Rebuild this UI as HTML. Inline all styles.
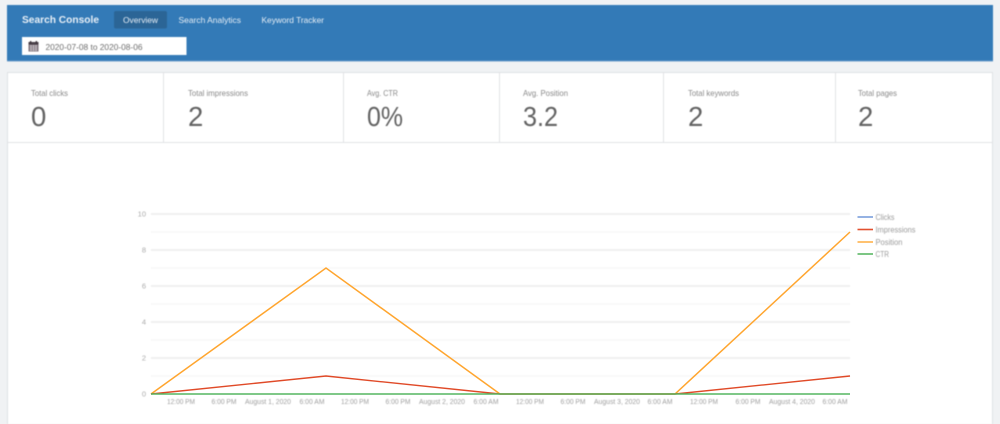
<!DOCTYPE html>
<html><head><meta charset="utf-8"><title>Search Console</title>
<style>
html,body{margin:0;padding:0;width:1000px;height:424px;overflow:hidden;background:#f0f2f4}
svg{display:block;position:absolute;left:0;top:0}
svg.base{filter:blur(.45px)}
svg.lines{filter:blur(.3px)}
text{font-family:"Liberation Sans",sans-serif}
.gl{font-size:7.5px;fill:#a0a0a0;text-anchor:middle}
.st{font-size:8.2px;fill:#8a8a8a}
.num{font-size:27.500px;fill:#636363}
.nav{font-size:8.5px;fill:#e6eef6}
.lg{font-size:8px;fill:#9c9c9c}
.ax{font-size:7.5px;fill:#aaaaaa;text-anchor:end}
</style></head><body>
<svg class="base" width="1000" height="424" viewBox="0 0 1000 424" xmlns="http://www.w3.org/2000/svg">
<rect width="1000" height="424" fill="#f0f2f4"/>
<!-- header -->
<rect x="7" y="5" width="986" height="56" fill="#337ab7"/>
<rect x="7" y="60.500" width="986" height="1" fill="#6a9bc9"/>
<text x="22" y="23" font-size="10.500" font-weight="bold" fill="#e9f0f7" textLength="77" lengthAdjust="spacingAndGlyphs">Search Console</text>
<rect x="114" y="11" width="53" height="17.500" rx="2" fill="#2b6596"/>
<text class="nav" x="123" y="23" textLength="35" lengthAdjust="spacingAndGlyphs">Overview</text>
<text class="nav" x="178.500" y="23" textLength="62.500" lengthAdjust="spacingAndGlyphs">Search Analytics</text>
<text class="nav" x="261.500" y="23" textLength="62.500" lengthAdjust="spacingAndGlyphs">Keyword Tracker</text>
<rect x="22" y="37" width="164.500" height="18" fill="#fff"/>
<!-- calendar icon -->
<g>
<rect x="28.500" y="43" width="10" height="8.500" fill="#7a6f78"/>
<rect x="28.500" y="42" width="10" height="2.500" fill="#4a4048"/>
<rect x="30" y="41" width="1.300" height="2.500" fill="#3a3038"/>
<rect x="35.700" y="41" width="1.300" height="2.500" fill="#3a3038"/>
<path d="M29.500 46h8M29.500 48h8M29.500 50h8M31 45v6M33.500 45v6M36 45v6" stroke="#e4dde2" stroke-width=".6" fill="none"/>
</g>
<text x="45.500" y="50" font-size="8.500" fill="#6e6e6e" textLength="97" lengthAdjust="spacingAndGlyphs">2020-07-08 to 2020-08-06</text>
<!-- panel -->
<rect x="7.500" y="72.500" width="985" height="360" fill="#fff" stroke="#dfe2e5"/>
<path d="M8 142.500H992M163.500 73V142M343.500 73V142M499.500 73V142M663.500 73V142M835.500 73V142" stroke="#e2e4e6" fill="none"/>
<text class="st" x="31" y="96" textLength="37" lengthAdjust="spacingAndGlyphs">Total clicks</text>
<text class="st" x="188" y="96" textLength="60" lengthAdjust="spacingAndGlyphs">Total impressions</text>
<text class="st" x="367" y="96" textLength="31" lengthAdjust="spacingAndGlyphs">Avg. CTR</text>
<text class="st" x="523" y="96" textLength="45" lengthAdjust="spacingAndGlyphs">Avg. Position</text>
<text class="st" x="688" y="96" textLength="51" lengthAdjust="spacingAndGlyphs">Total keywords</text>
<text class="st" x="858" y="96" textLength="39" lengthAdjust="spacingAndGlyphs">Total pages</text>
<text class="num" x="31" y="126">0</text>
<text class="num" x="188" y="126">2</text>
<text class="num" x="367" y="126" textLength="36" lengthAdjust="spacingAndGlyphs">0%</text>
<text class="num" x="523" y="126" textLength="35" lengthAdjust="spacingAndGlyphs">3.2</text>
<text class="num" x="688" y="126">2</text>
<text class="num" x="858" y="126">2</text>
<!-- grid -->
<g stroke="#f3f3f3" stroke-width="1" fill="none">
<path d="M151 232H850M151 268H850M151 304H850M151 340H850M151 376H850"/>
</g>
<g stroke="#ececec" stroke-width="1.500" fill="none">
<path d="M151 214H850M151 250H850M151 286H850M151 322H850M151 358H850"/>
</g>
<text class="ax" x="146" y="216.500">10</text>
<text class="ax" x="146" y="252.500">8</text>
<text class="ax" x="146" y="288.500">6</text>
<text class="ax" x="146" y="324.500">4</text>
<text class="ax" x="146" y="360.500">2</text>
<text class="ax" x="146" y="396.500">0</text>
<!-- x labels -->
<text class="gl" x="181" y="404" textLength="28" lengthAdjust="spacingAndGlyphs">12:00 PM</text>
<text class="gl" x="224" y="404" textLength="25" lengthAdjust="spacingAndGlyphs">6:00 PM</text>
<text class="gl" x="268" y="404" textLength="46" lengthAdjust="spacingAndGlyphs">August 1, 2020</text>
<text class="gl" x="312" y="404" textLength="25" lengthAdjust="spacingAndGlyphs">6:00 AM</text>
<text class="gl" x="355" y="404" textLength="28" lengthAdjust="spacingAndGlyphs">12:00 PM</text>
<text class="gl" x="398" y="404" textLength="25" lengthAdjust="spacingAndGlyphs">6:00 PM</text>
<text class="gl" x="442" y="404" textLength="46" lengthAdjust="spacingAndGlyphs">August 2, 2020</text>
<text class="gl" x="486" y="404" textLength="25" lengthAdjust="spacingAndGlyphs">6:00 AM</text>
<text class="gl" x="530" y="404" textLength="28" lengthAdjust="spacingAndGlyphs">12:00 PM</text>
<text class="gl" x="573" y="404" textLength="25" lengthAdjust="spacingAndGlyphs">6:00 PM</text>
<text class="gl" x="617" y="404" textLength="46" lengthAdjust="spacingAndGlyphs">August 3, 2020</text>
<text class="gl" x="660" y="404" textLength="25" lengthAdjust="spacingAndGlyphs">6:00 AM</text>
<text class="gl" x="704" y="404" textLength="28" lengthAdjust="spacingAndGlyphs">12:00 PM</text>
<text class="gl" x="748" y="404" textLength="25" lengthAdjust="spacingAndGlyphs">6:00 PM</text>
<text class="gl" x="792" y="404" textLength="46" lengthAdjust="spacingAndGlyphs">August 4, 2020</text>
<text class="gl" x="835" y="404" textLength="25" lengthAdjust="spacingAndGlyphs">6:00 AM</text>
<!-- legend text -->
<text class="lg" x="875.500" y="220" textLength="19" lengthAdjust="spacingAndGlyphs">Clicks</text>
<text class="lg" x="875.500" y="232.500" textLength="40" lengthAdjust="spacingAndGlyphs">Impressions</text>
<text class="lg" x="875.500" y="245" textLength="27" lengthAdjust="spacingAndGlyphs">Position</text>
<text class="lg" x="875.500" y="257" textLength="13.500" lengthAdjust="spacingAndGlyphs">CTR</text>
</svg>
<svg class="lines" width="1000" height="424" viewBox="0 0 1000 424" xmlns="http://www.w3.org/2000/svg">
<!-- series -->
<polyline points="151,394 326,268 500,394 675,394 850,232" fill="none" stroke="#ffa52e" stroke-width="1.500"/>
<polyline points="151,394 326,376 500,394 675,394 850,376" fill="none" stroke="#e04a28" stroke-width="1.400"/>
<path d="M151 394H850" stroke="#55b560" stroke-width="1.500"/>
<!-- legend lines -->
<g stroke-width="1.600" fill="none">
<path d="M857.500 217H873" stroke="#7b9fdc"/>
<path d="M857.500 229.500H873" stroke="#e2502f"/>
<path d="M857.500 242H873" stroke="#ffb24d"/>
<path d="M857.500 254H873" stroke="#5cb866"/>
</g>
</svg>
</body></html>
